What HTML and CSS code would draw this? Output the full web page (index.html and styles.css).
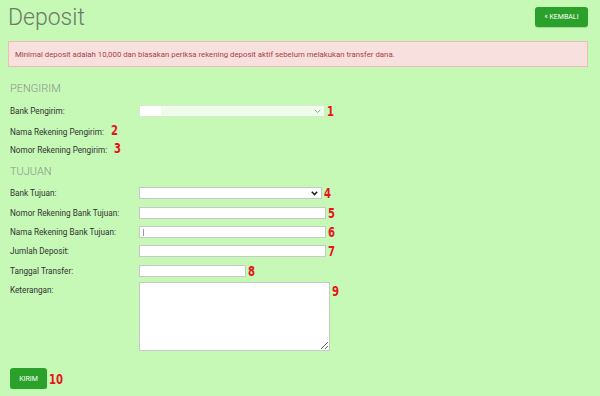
FILE: index.html
```html
<!DOCTYPE html>
<html lang="id">
<head>
  <meta charset="UTF-8" />
  <meta name="viewport" content="width=device-width, initial-scale=1" />
  <title>Deposit</title>
  <link rel="stylesheet" href="styles.css">
</head>
<body>
  <div class="halaman">
    <div class="kepala">
      <h1>Deposit</h1>
      <button class="tombol tombol-kembali">&laquo; KEMBALI</button>
    </div>

    <div class="peringatan">
      Minimal deposit adalah 10,000 dan biasakan periksa rekening deposit aktif sebelum melakukan transfer dana.
    </div>

    <h3 class="judul-bagian">PENGIRIM</h3>

    <div class="baris baris-pertama">
      <label>Bank Pengirim:</label>
      <div class="isian">
        <div class="pilih pilih-pudar">
          <span class="blok-putih"></span>
          <svg class="panah" width="7" height="5" viewBox="0 0 7 5"><path d="M0.8 0.8 L3.5 3.6 L6.2 0.8" fill="none" stroke="#9aa596" stroke-width="1"/></svg>
        </div>
        <span class="nomor">1</span>
      </div>
    </div>
    <div class="baris">
      <label class="label-pendek">Nama Rekening Pengirim: <span class="nomor">2</span></label>
    </div>
    <div class="baris">
      <label class="label-pendek">Nomor Rekening Pengirim: <span class="nomor">3</span></label>
    </div>

    <h3 class="judul-bagian bagian-tujuan">TUJUAN</h3>

    <div class="baris baris-pertama baris-tujuan">
      <label>Bank Tujuan:</label>
      <div class="isian">
        <div class="pilih pilih-tujuan">
          <svg class="panah" width="7" height="5" viewBox="0 0 7 5"><path d="M0.8 0.8 L3.5 3.6 L6.2 0.8" fill="none" stroke="#222" stroke-width="1.5"/></svg>
        </div>
        <span class="nomor">4</span>
      </div>
    </div>
    <div class="baris baris-tujuan">
      <label>Nomor Rekening Bank Tujuan:</label>
      <div class="isian"><input class="kotak kotak-lebar" type="text" /><span class="nomor">5</span></div>
    </div>
    <div class="baris baris-tujuan">
      <label>Nama Rekening Bank Tujuan:</label>
      <div class="isian"><div class="kotak kotak-lebar"><span class="kursor"></span></div><span class="nomor">6</span></div>
    </div>
    <div class="baris baris-tujuan">
      <label>Jumlah Deposit:</label>
      <div class="isian"><input class="kotak kotak-lebar" type="text" /><span class="nomor">7</span></div>
    </div>
    <div class="baris baris-tujuan">
      <label>Tanggal Transfer:</label>
      <div class="isian"><input class="kotak kotak-tanggal" type="text" /><span class="nomor">8</span></div>
    </div>
    <div class="baris baris-keterangan">
      <label>Keterangan:</label>
      <div class="isian isian-atas"><textarea class="keterangan"></textarea><span class="nomor">9</span></div>
    </div>

    <div class="kaki">
      <button class="tombol tombol-kirim">KIRIM</button>
      <span class="nomor">10</span>
    </div>
  </div>
</body>
</html>
```

FILE: styles.css
```css
* {
  box-sizing: border-box;
}

body {
  margin: 0;
  background-color: #c6f8b6;
  font-family: Roboto, "Liberation Sans", sans-serif;
  color: #333;
  font-size: 8.2px;
}

.halaman {
  padding: 0 12px 0 8px;
}

.kepala {
  display: flex;
  justify-content: space-between;
  align-items: flex-start;
  height: 41px;
}

h1 {
  margin: 3px 0 0;
  font-size: 23px;
  font-weight: 300;
  line-height: 30px;
  color: #6c7c67;
}

.tombol {
  font-family: Roboto, "Liberation Sans", sans-serif;
  background-color: #2aa12a;
  color: #fff;
  border: none;
  border-radius: 3px;
  font-size: 7px;
  padding: 0;
  box-shadow: 0 1px 1px rgba(0, 0, 0, 0.15);
}

.tombol-kembali {
  margin-top: 7px;
  width: 53px;
  height: 20px;
}

.peringatan {
  display: flex;
  align-items: center;
  height: 26px;
  padding: 0 10px 0 6px;
  background-color: #f8e0df;
  border: 1px solid #ecbdbd;
  color: #a83f46;
  font-size: 7.8px;
}

.judul-bagian {
  margin: 15px 0 0 2px;
  font-size: 11px;
  font-weight: 300;
  line-height: 14px;
  color: #8a9486;
}

.bagian-tujuan {
  margin-top: 7px;
}

.baris {
  display: grid;
  grid-template-columns: 129px 1fr;
  align-items: center;
  height: 18.5px;
  padding-left: 2px;
}

.baris-pertama {
  margin-top: 6px;
}

.baris-tujuan {
  height: 19.4px;
}

.baris-tujuan.baris-pertama {
  margin-top: 5px;
}

.baris label {
  white-space: nowrap;
}

.label-pendek {
  grid-column: 1 / 3;
}

.isian {
  display: flex;
  align-items: center;
}

.isian-atas {
  align-items: flex-start;
}

.nomor {
  display: inline-block;
  font-family: "DejaVu Sans Condensed", "DejaVu Sans", sans-serif;
  font-weight: bold;
  font-size: 14px;
  line-height: 14px;
  color: #e8141c;
  margin-left: 2px;
  transform: scale(0.8, 1.05);
  transform-origin: left center;
}

.label-pendek .nomor {
  margin-left: 5px;
}

.pilih {
  position: relative;
  height: 12px;
  border: 1px solid #d7e9d2;
  background-color: #effbeb;
}

.pilih-pudar {
  width: 186px;
}

.blok-putih {
  display: block;
  width: 21px;
  height: 10px;
  background-color: #fff;
}

.pilih-tujuan {
  width: 183px;
  height: 12px;
  background-color: #fff;
  border: 1px solid #c8c8c8;
}

.panah {
  position: absolute;
  right: 3px;
  top: 3px;
}

.kotak {
  display: block;
  height: 12px;
  margin: 0;
  padding: 0 2px;
  background-color: #fff;
  border: 1px solid #c8c8c8;
  font-size: 8px;
}

.kotak-lebar {
  width: 187px;
}

.kotak-tanggal {
  width: 107px;
}

.kursor {
  display: block;
  width: 1px;
  height: 7px;
  margin: 2px 0 0 1px;
  background-color: #999;
}

.baris-keterangan {
  height: auto;
  align-items: start;
  margin-top: 2px;
}

.baris-keterangan label {
  margin-top: 3px;
}

.keterangan {
  display: block;
  width: 191px;
  height: 69px;
  margin: 0;
  border: 1px solid #c8c8c8;
  background-color: #fff;
  resize: both;
}

.baris-keterangan .nomor {
  margin-top: 2px;
}

.kaki {
  display: flex;
  align-items: center;
  margin-top: 17px;
  padding-left: 2px;
}

.tombol-kirim {
  width: 37px;
  height: 21px;
  font-size: 7px;
}
```
